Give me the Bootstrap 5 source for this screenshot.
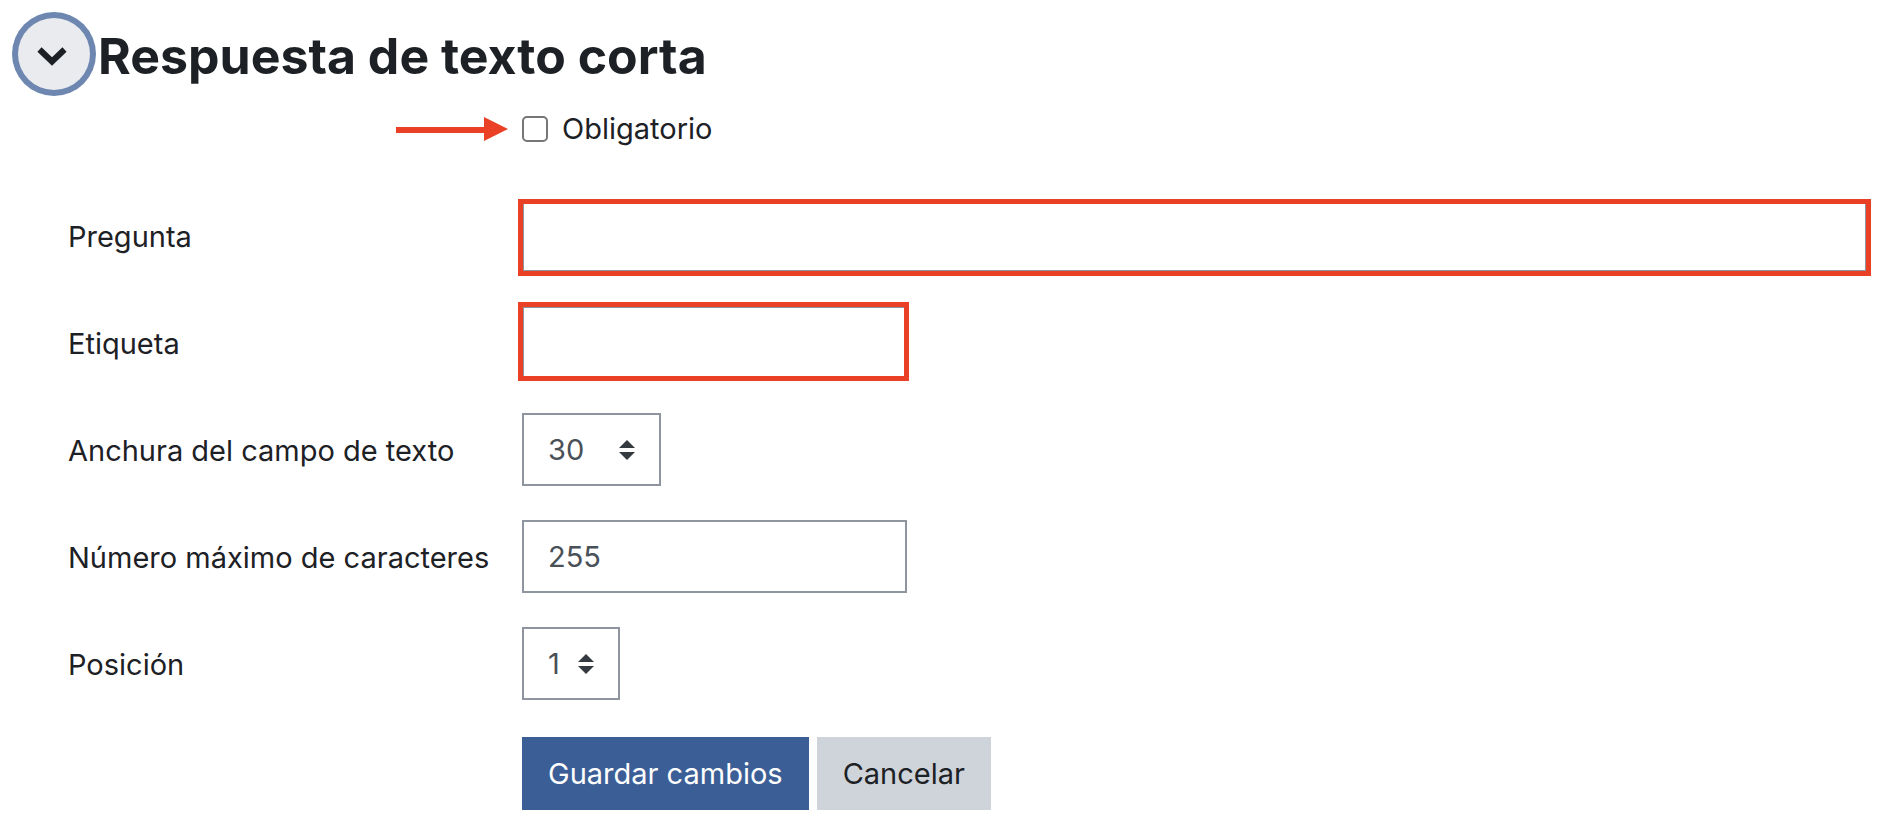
<!DOCTYPE html>
<html lang="es">
<head>
<meta charset="utf-8">
<meta name="viewport" content="width=device-width, initial-scale=1">
<title>Respuesta de texto corta</title>
<link href="https://cdn.jsdelivr.net/npm/bootstrap@5.3.0/dist/css/bootstrap.min.css" rel="stylesheet">
<style>
  body { font-family: Inter, "Liberation Sans", sans-serif; font-size: 29px; line-height: 44px; color: #1d2125; background: #fff; }
  .section-head { padding: 18px 18px 0; gap: 8px; }
  .section-head h1 { padding-top: 4px; font-size: 50px; line-height: 68px; font-weight: 700; }
  .toggle { width: 72px; height: 72px; background: #e9ebef; color: #1d2125; box-shadow: 0 0 0 6px #6d87b1; }
  .fields { padding: 17px 15px 24px 67px; }
  .field-col { padding-left: 5px; }
  .field-row { margin-bottom: 34px; }
  .field-row .col-form-label { padding: 16px 0 13px 1px; line-height: 44px; }
  .check-row { margin-bottom: 48px; }
  .arrow { width: 112px; height: 26px; margin-right: 9px; }
  .form-check-input.required-box { width: 26px; height: 26px; margin: 0 14px 0 0; border: 2px solid #767676; border-radius: 5px; }
  .control { height: 73px; padding: 0 24px; border: 2px solid #8f959e; border-radius: 0; font-size: 29px; line-height: 44px; color: #495057; background-color: #fff; }
  .control-medium { width: 385px; }
  .form-select.control { background-image: url("data:image/svg+xml,%3csvg xmlns='http://www.w3.org/2000/svg' viewBox='0 0 4 5'%3e%3cpath fill='%23343a40' d='M2 0L0 2h4zm0 5L0 3h4z'/%3e%3c/svg%3e"); background-size: 16px 20px; background-position: right 24px center; padding-right: 46px; }
  .select-wide { width: 139px; }
  .select-narrow { width: 98px; }
  /* highlight frame laid over a field */
  .highlight { position: relative; }
  .highlight::after { content: ""; position: absolute; border: 5px solid #ea4025; pointer-events: none; }
  .highlight-full::after { inset: 0 -4px -4px; }
  .highlight-medium::after { inset: -4px -2px -2px -4px; }
  .actions { gap: 8px; margin-top: 37px; }
  .actions .btn { height: 73px; padding: 0 24px; border: 2px solid; border-radius: 0; font-size: 29px; line-height: 44px; }
  .actions .btn-primary { background: #3b5e96; border-color: #3b5e96; }
  .actions .btn-secondary { background: #ced4da; border-color: #ced4da; color: #1d2125; }
</style>
</head>
<body>
<main>
  <header class="section-head d-flex align-items-center">
    <button type="button" class="toggle btn rounded-circle border-0 p-0 flex-shrink-0 d-flex align-items-center justify-content-center" aria-label="Contraer sección" aria-expanded="true">
      <svg width="72" height="72" viewBox="0 0 72 72" fill="none" stroke="currentColor" stroke-width="6" stroke-linejoin="miter" aria-hidden="true"><path d="M21.5 31.5L34 43.500L46.500 31.500"/></svg>
    </button>
    <h1 class="mb-0">Respuesta de texto corta</h1>
  </header>

  <form class="fields">
    <div class="row g-0 check-row">
      <div class="col-3 d-flex align-items-center justify-content-end">
        <svg class="arrow" viewBox="0 0 112 26" fill="#ea4025" aria-hidden="true"><path d="M0 11h88V1l24 12-24 12v-8H0z"/></svg>
      </div>
      <div class="col-9 field-col d-flex align-items-center">
        <input class="form-check-input required-box flex-shrink-0" type="checkbox" id="required">
        <label for="required">Obligatorio</label>
      </div>
    </div>

    <div class="row g-0 field-row">
      <label class="col-3 col-form-label" for="question">Pregunta</label>
      <div class="col-9 field-col">
        <div class="highlight highlight-full"><input class="form-control control" type="text" id="question"></div>
      </div>
    </div>

    <div class="row g-0 field-row">
      <label class="col-3 col-form-label" for="tag">Etiqueta</label>
      <div class="col-9 field-col">
        <div class="highlight highlight-medium control-medium"><input class="form-control control" type="text" id="tag"></div>
      </div>
    </div>

    <div class="row g-0 field-row">
      <label class="col-3 col-form-label" for="width">Anchura del campo de texto</label>
      <div class="col-9 field-col">
        <select class="form-select control select-wide" id="width"><option>30</option></select>
      </div>
    </div>

    <div class="row g-0 field-row">
      <label class="col-3 col-form-label" for="max">Número máximo de caracteres</label>
      <div class="col-9 field-col">
        <input class="form-control control control-medium" type="text" id="max" value="255">
      </div>
    </div>

    <div class="row g-0 field-row mb-0">
      <label class="col-3 col-form-label" for="position">Posición</label>
      <div class="col-9 field-col">
        <select class="form-select control select-narrow" id="position"><option>1</option></select>
      </div>
    </div>

    <div class="row g-0">
      <div class="col-9 offset-3 field-col">
        <div class="actions d-flex">
          <button type="submit" class="btn btn-primary">Guardar cambios</button>
          <button type="button" class="btn btn-secondary">Cancelar</button>
        </div>
      </div>
    </div>
  </form>
</main>
<script src="https://cdn.jsdelivr.net/npm/bootstrap@5.3.0/dist/js/bootstrap.bundle.min.js"></script>
</body>
</html>
